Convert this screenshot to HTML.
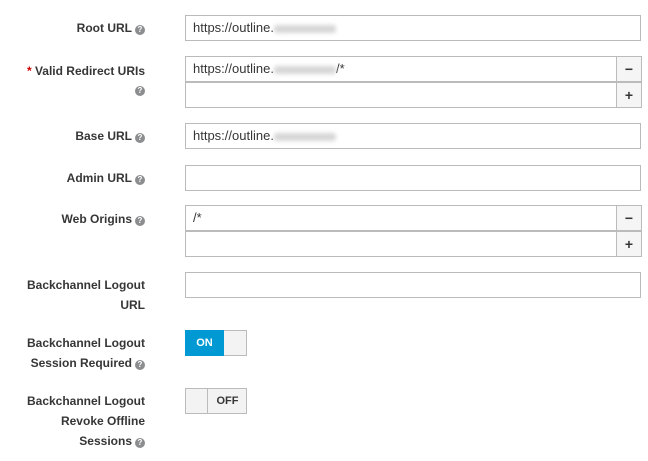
<!DOCTYPE html>
<html><head><style>
body{margin:0;width:648px;height:461px;background:#fff;font-family:"Liberation Sans",sans-serif;font-size:12px;color:#363636;position:relative;overflow:hidden}
.l{position:absolute;right:503px;text-align:right;font-weight:bold;line-height:20px;white-space:nowrap}
.q{display:inline-block;width:10px;height:10px;border-radius:50%;background:#8b8d8f;color:#fff;font-size:8px;line-height:10px;text-align:center;vertical-align:0px;margin-left:3px;font-weight:bold}
.i{position:absolute;left:185px;width:454px;height:24px;border:1px solid #bbb;background:#fff;line-height:24px;padding-left:7px;box-sizing:content-box;font-size:13px}
.b{position:absolute;left:616px;width:24px;height:24px;border:1px solid #bbb;background:#f5f5f5;text-align:center;line-height:24px;font-weight:bold;font-size:14px;color:#363636}
.blur{display:inline-block;width:62px;height:8px;background:#d6d6d6;filter:blur(2px);vertical-align:middle;border-radius:3px}
.t{position:absolute;left:185px;width:60px;height:24px;border:1px solid #bbb;background:#f3f3f3;font-weight:bold;font-size:11px;line-height:24px}
</style></head><body>
<div class="l" style="top:18px">Root URL<span class="q">?</span></div>
<div class="i" style="top:15px;width:447px">https://outline.<span class="blur"></span></div>

<div class="l" style="top:61px"><span style="color:#c00">*</span> Valid Redirect URIs</div>
<div class="l" style="top:79px"><span class="q">?</span></div>
<div class="i" style="top:56px;width:423px">https://outline.<span class="blur"></span>/*</div>
<div class="b" style="top:56px">−</div>
<div class="i" style="top:82px;width:423px"></div>
<div class="b" style="top:82px">+</div>

<div class="l" style="top:126px">Base URL<span class="q">?</span></div>
<div class="i" style="top:123px;width:447px">https://outline.<span class="blur"></span></div>

<div class="l" style="top:168px">Admin URL<span class="q">?</span></div>
<div class="i" style="top:165px;width:447px"></div>

<div class="l" style="top:209px">Web Origins<span class="q">?</span></div>
<div class="i" style="top:205px;width:423px">/*</div>
<div class="b" style="top:205px">−</div>
<div class="i" style="top:231px;width:423px"></div>
<div class="b" style="top:231px">+</div>

<div class="l" style="top:275px">Backchannel Logout</div>
<div class="l" style="top:295px">URL</div>
<div class="i" style="top:272px;width:447px"></div>

<div class="l" style="top:333px">Backchannel Logout</div>
<div class="l" style="top:353px">Session Required<span class="q">?</span></div>
<div class="t" style="top:330px"><div style="position:absolute;left:-1px;top:-1px;width:39px;height:26px;background:#0099d3;color:#fff;text-align:center;line-height:26px">ON</div></div>

<div class="l" style="top:391px">Backchannel Logout</div>
<div class="l" style="top:411px">Revoke Offline</div>
<div class="l" style="top:431px">Sessions<span class="q">?</span></div>
<div class="t" style="top:388px"><div style="position:absolute;left:21px;top:0;width:39px;height:24px;border-left:1px solid #bbb;text-align:center">OFF</div></div>
</body></html>
